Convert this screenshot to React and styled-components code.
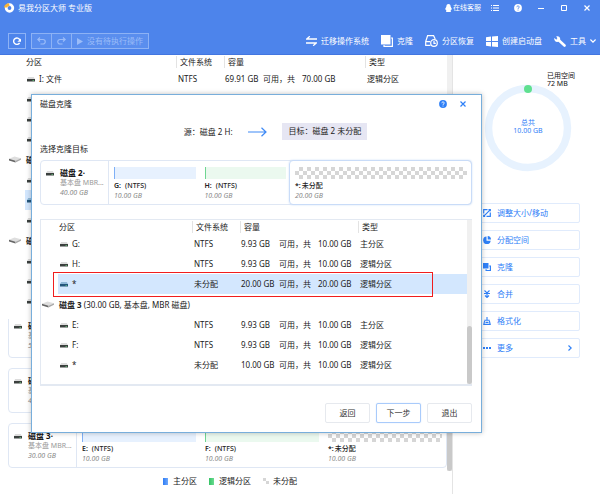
import { Fragment } from "react";
import styled, { createGlobalStyle, css } from "styled-components";

const GlobalStyle = createGlobalStyle`
  * {
    box-sizing: border-box;
  }
  body {
    margin: 0;
    background: #fff;
    color: #222;
    font-family: "Noto Sans", "Noto Sans CJK SC", sans-serif;
    font-size: 8px;
    line-height: 10px;
  }
  button {
    padding: 0;
    border: 0;
    background: none;
    color: inherit;
    font: inherit;
    white-space: nowrap;
    cursor: pointer;
  }
  svg {
    display: block;
    flex-shrink: 0;
  }
`;

const checker = css`
  background: repeating-conic-gradient(#d6d6d6 0 25%, #fff 0 50%) 0 0 / 8px 8px;
`;

const Page = styled.div`
  display: flex;
  flex-direction: column;
  height: 100vh;
  position: relative;
  overflow: hidden;
`;

/* header */
const Header = styled.header`
  background-color: #4d84eb;
  border-bottom: 1px solid #4276e0;
  color: #fff;
`;
const TitleBar = styled.div`
  display: flex;
  align-items: center;
  justify-content: space-between;
  height: 16px;
  padding: 0 9px 0 4px;
`;
const AppName = styled.h1`
  display: flex;
  align-items: center;
  gap: 3px;
  margin: 0;
  font-size: 8px;
  font-weight: 400;
`;
const WindowControls = styled.div`
  display: flex;
  align-items: center;
  gap: 15px;
  button {
    display: grid;
    place-items: center;
    width: 8px;
  }
`;
const ServiceLink = styled.a`
  display: flex;
  align-items: center;
  gap: 1px;
  margin-right: -5px;
  color: #fff;
  font-size: 7px;
  text-decoration: none;
`;
const Toolbar = styled.div`
  display: flex;
  align-items: center;
  justify-content: space-between;
  height: 38px;
  padding: 12px 4px 0 8px;
`;
const ToolGroup = styled.div`
  display: flex;
  gap: ${props => props.$gap}px;
`;
const Refresh = styled.button`
  display: grid;
  place-items: center;
  width: 18px;
  height: 16px;
  border: 1px solid #8db2f5;
`;
const Pending = styled.div`
  display: flex;
  height: 16px;
  border: 1px solid #8db2f5;
  background-color: #5a8eee;
`;
const PendingButton = styled.button`
  display: flex;
  align-items: center;
  justify-content: center;
  gap: 4px;
  min-width: 19px;
  padding: 0 5px;
  color: #9bbcf8;
  & + & {
    border-left: 1px solid #8db2f5;
  }
`;
const Tool = styled.button`
  display: flex;
  align-items: center;
  gap: 4px;
`;

/* body */
const Body = styled.div`
  display: flex;
  flex: 1;
  min-height: 0;
`;
const Main = styled.main`
  display: flex;
  flex-direction: column;
  flex: 1;
  min-width: 0;
  border-right: 1px solid #e4e4e4;
`;
const Scroller = styled.div`
  display: flex;
  min-height: 0;
  ${props => props.$grow && "flex: 1;"}
`;
const Track = styled.div`
  display: flex;
  flex-direction: column;
  justify-content: flex-end;
  width: 5px;
  background-color: #f0f0f0;
`;
const Thumb = styled.div`
  height: ${props => props.$size}px;
  border-radius: 3px;
  background-color: #c9c9c9;
`;

const Table = styled.table`
  flex: 1;
  width: 100%;
  min-width: 0;
  table-layout: fixed;
  border-collapse: collapse;
  margin-bottom: ${props => props.$space}px;
  th,
  td {
    padding: 0;
    text-align: left;
    font-weight: 400;
    white-space: nowrap;
  }
`;
const Head = styled.th`
  height: ${props => props.$height}px;
  div {
    padding-left: ${props => (props.$line ? 3 : 1)}px;
    line-height: 12px;
    border-left: ${props => (props.$line ? "1px solid #e3e3e3" : "0")};
  }
`;
const Row = styled.tr`
  height: 20px;
  td:not(:first-child) {
    padding-left: 2px;
    background-color: ${props => (props.$selected ? "#d3e7fe" : "transparent")};
  }
`;
const DiskRow = styled.tr`
  height: 21px;
  td:last-child {
    padding-left: 1px;
  }
  svg {
    margin-left: auto;
    margin-right: 4px;
  }
`;
const NameCell = styled.div`
  display: flex;
  align-items: center;
  gap: 4px;
`;
const Capacity = styled.div`
  display: grid;
  grid-template-columns: 38px 39px auto;
  margin-left: -1px;
`;

/* disk cards */
const Cards = styled.div`
  display: flex;
  flex-direction: column;
  justify-content: flex-end;
  gap: 10px;
  flex: 1;
  min-width: 0;
  overflow: hidden;
  padding: 0 0 3px 8px;
`;
const Card = styled.section`
  display: flex;
  flex-shrink: 0;
  height: 45px;
  border: 1px solid #dfe7f4;
  border-radius: 4px;
  background-color: #fff;
`;
const CardInfo = styled.div`
  display: flex;
  gap: 6px;
  width: 68px;
  padding: 7px 0 0 5px;
  border-right: 1px solid #dfe7f4;
  svg {
    margin-top: 3px;
  }
`;
const CardTexts = styled.div`
  color: #999;
  font-size: 7px;
  white-space: nowrap;
`;
const DiskName = styled.strong`
  display: block;
  color: #111;
  font-size: 8px;
`;
const Segments = styled.div`
  display: grid;
  flex: 1;
  grid-template-columns: ${props => props.$sizes.map(size => `minmax(0, ${size}fr)`).join(" ")};
`;
const Segment = styled.div`
  padding: 6px 4px 0 5px;
  font-size: 7px;
  white-space: nowrap;
  ${props =>
    props.$selected &&
    css`
      margin: -1px;
      border: 1px solid #c9dcf8;
      border-radius: 4px;
      box-shadow: 0 0 2px #c9dcf8;
    `}
`;
const Bar = styled.div`
  height: 12px;
  margin-bottom: 2px;
  ${props => props.$kind === "primary" && "background: #e7f1fe; border-left: 1px solid #7fb0f6;"}
  ${props => props.$kind === "logical" && "background: #ebf9ef; border-left: 1px solid #6fd692;"}
  ${props => props.$kind === "free" && checker}
`;
const SegmentLabel = styled.div`
  font-weight: 500;
  b {
    margin-right: ${props => (props.$gap ? 4 : 1)}px;
    font-weight: 600;
  }
`;
const Size = styled.em`
  display: block;
  color: #888;
  font-size: 7px;
`;

const Legend = styled.footer`
  display: flex;
  align-items: flex-start;
  justify-content: center;
  gap: 12px;
  height: 23px;
  padding: 5px 0 0 8px;
`;
const LegendItem = styled.span`
  display: flex;
  align-items: center;
  gap: 5px;
  &::before {
    content: "";
    width: 5px;
    height: 7px;
    background: ${props => props.$color};
  }
  ${props =>
    props.$free &&
    css`
      gap: 4px;
      &::before {
        width: 6px;
        height: 6px;
        background: repeating-conic-gradient(#fff 0 25%, #d6d6d6 0 50%);
      }
    `}
`;

/* side panel */
const Side = styled.aside`
  width: 147px;
  padding: 17px 20px 0 23px;
`;
const Usage = styled.div`
  display: grid;
  justify-items: center;
  margin-bottom: 31px;
  font-size: 7px;
  line-height: 8px;
  > * {
    grid-area: 1 / 1;
  }
  > svg {
    margin-top: 12px;
  }
`;
const Used = styled.div`
  justify-self: end;
  width: 33px;
  color: #111;
  white-space: nowrap;
`;
const Total = styled.div`
  align-self: center;
  margin-top: 9px;
  color: #2f80f7;
  text-align: center;
`;
const Actions = styled.div`
  display: flex;
  flex-direction: column;
  gap: 7px;
`;
const Action = styled.button`
  display: flex;
  align-items: center;
  gap: 6px;
  height: 20px;
  padding: 0 7px 0 6px;
  border: 1px solid #e0ebfc;
  border-radius: 2px;
  color: #2f80f7;
  svg + span + svg {
    margin-left: auto;
  }
`;

/* dialog */
const Dialog = styled.div`
  position: absolute;
  top: 94px;
  left: 31px;
  right: 118px;
  padding: 0 9px 9px 8px;
  border: 1px solid #78aedb;
  background-color: #fff;
  box-shadow: 0 0 5px rgba(0, 0, 0, 0.25);
`;
const DialogTitle = styled.div`
  display: flex;
  align-items: center;
  justify-content: space-between;
  height: 18px;
  h2 {
    margin: 0;
    font-size: 8px;
    font-weight: 400;
  }
`;
const DialogControls = styled.div`
  display: flex;
  align-items: center;
  gap: 13px;
  padding-right: 6px;
  color: #2f80f7;
`;
const Route = styled.div`
  display: flex;
  align-items: center;
  justify-content: center;
  gap: 15px;
  padding: 10px 0 4px 39px;
`;
const Target = styled.span`
  padding: 3px 6px 4px 7px;
  background-color: #e6e6f3;
`;
const Caption = styled.p`
  margin: 0 0 6px;
`;
const ListBox = styled.div`
  position: relative;
  display: flex;
  margin-top: 14px;
  border: 1px solid #e3e9f2;
  border-width: 1px 0 2px 1px;
`;
const Highlight = styled.div`
  position: absolute;
  top: 52px;
  left: 12px;
  right: 39px;
  height: 25px;
  border: 1px solid #f01d1d;
`;
const DialogFooter = styled.div`
  display: flex;
  justify-content: flex-end;
  gap: 6px;
  padding-top: 17px;
`;
const DialogButton = styled.button`
  width: 45px;
  height: 20px;
  border: 1px solid ${props => (props.$primary ? "#a9cbfb" : "#e6e9ee")};
  border-radius: 2px;
  color: #333;
  box-shadow: ${props => (props.$primary ? "0 0 1px #a9cbfb" : "none")};
`;

const DriveIcon = ({ active }) => (
  <svg width="8" height="5" viewBox="0 0 8 5">
    <path d="M1.2 0h5.6L8 2H0z" fill={active ? "#8fb8d8" : "#dcdcdc"} />
    <path d="M0 2h8v2.5H0z" fill={active ? "#24567c" : "#3b403e"} />
    <path d="M5.5 3h1.500v.8H5.500z" fill="#63c77b" />
  </svg>
);

const DiskIcon = () => (
  <svg width="12" height="7" viewBox="0 0 12 7">
    <path d="M0 2.8 5.5 0.6 12 2.2 6.5 4.8z" fill="#dedede" />
    <path d="M0 2.8 6.5 4.8v1.8L0 4.4z" fill="#666" />
    <path d="M6.5 4.8 12 2.2v1.5L6.5 6.6z" fill="#aaa" />
  </svg>
);

const HelpIcon = ({ color, mark }) => (
  <svg width="8" height="8" viewBox="0 0 8 8">
    <circle cx="4" cy="4" r="3.9" fill={color} />
    <path d="M2.8 3.2c0-1.7 2.5-1.6 2.4-.1C5.2 4 4 3.9 4 4.9M4 5.6v.9" fill="none" stroke={mark} strokeWidth="0.9" />
  </svg>
);

const CloseIcon = () => (
  <svg width="6" height="6" viewBox="0 0 6 6">
    <path d="M.5.5l5 5m0-5-5 5" stroke="currentColor" strokeWidth="1.2" />
  </svg>
);

const CopyIcon = ({ size }) => (
  <svg width={size} height={size} viewBox="0 0 12 12">
    <path d="M0 0h9.500v9.500H0z" fill="currentColor" />
    <path d="M10 3h1.400v8.400H3V10" fill="none" stroke="currentColor" strokeWidth="1.200" />
  </svg>
);

const tools = [
  {
    label: "迁移操作系统",
    icon: (
      <svg width="11" height="10" viewBox="0 0 11 10">
        <path d="M3.8.3.8 3H11M7.200 9.700 10.200 7H0" fill="none" stroke="#fff" strokeWidth="1.3" />
      </svg>
    ),
  },
  { label: "克隆", icon: <CopyIcon size={12} /> },
  {
    label: "分区恢复",
    icon: (
      <svg width="13" height="12" viewBox="0 0 13 12" fill="none" stroke="#fff" strokeWidth="1.2">
        <path d="M5.500 10.400H.700V6.500L2.600.700h6L10.200 4M.700 6.700h4.500" />
        <circle cx="9" cy="8" r="3.300" />
        <path d="M9 6v2.300h1.800" />
      </svg>
    ),
  },
  {
    label: "创建启动盘",
    icon: (
      <svg width="12" height="11" viewBox="0 0 12 11" fill="#fff">
        <path d="M0 1.200 5 .6V5H0zM6 .5 12 0v5H6zM0 6h5v4.500L0 9.800zM6 6h6v5l-6-.6z" />
      </svg>
    ),
  },
  {
    label: "工具",
    icon: (
      <svg width="12" height="11" viewBox="0 0 12 11">
        <path d="M4 3.500 10.500 9.500" stroke="#fff" strokeWidth="2.600" strokeLinecap="round" />
        <path d="M.300 2 2.500 3.800 3.700 2.700 2.200.4C4.500-.4 6.600 1.200 6.200 3.500 5.700 6 2.500 6.700 1 4.900.300 4 .100 3 .300 2z" fill="#fff" />
      </svg>
    ),
    more: true,
  },
];

const actions = [
  {
    label: "调整大小/移动",
    icon: <path d="M4.500.7H.7v3.800M3.500 7.300h3.800V3.500M.6 7.400 7.400.6M5.500.7h1.800v1.500M.7 5.800v1.500h1.500" fill="none" stroke="currentColor" strokeWidth="1.200" />,
  },
  {
    label: "分配空间",
    icon: <path d="M3.500.600V4.700h4.200A3.800 3.800 0 1 1 3.500.600zM4.700 0A3.600 3.600 0 0 1 8 3.500H4.700z" fill="currentColor" />,
  },
  {
    label: "克隆",
    icon: (
      <g fill="currentColor">
        <path d="M0 0h5.500v5.500H0z" />
        <path d="M6.200 2.500H8V8H2.500V6.200h1.200v.700h3.100V3.600h-.6z" />
      </g>
    ),
  },
  {
    label: "合并",
    icon: <path d="M1.500.500 4 3 6.500.500M4 3v4.700M1 3.500h6M2 5.500 4 7.500l2-2" fill="none" stroke="currentColor" strokeWidth="1.100" />,
  },
  {
    label: "格式化",
    icon: <path d="M4 0V3M1.300 3.200h5.400M1.600 4 .800 7.400h6.400L6.400 4M2.500 5.400h3" fill="none" stroke="currentColor" strokeWidth="1.100" />,
  },
  {
    label: "更多",
    icon: <path d="M0 3h2v2H0zM3 3h2v2H3zM6 3h2v2H6z" fill="currentColor" />,
    more: true,
  },
];

const mainRows = [
  { name: "I: 文件", fs: "NTFS", free: "69.91 GB", total: "70.00 GB", type: "逻辑分区" },
  { name: "J:", fs: "NTFS", free: "9.93 GB", total: "10.00 GB", type: "逻辑分区" },
  { name: "K:", fs: "NTFS", free: "9.93 GB", total: "10.00 GB", type: "逻辑分区" },
  { name: "*", fs: "未分配", free: "10.00 GB", total: "10.00 GB", type: "逻辑分区" },
  { disk: "磁盘 2", detail: "(40.00 GB, 基本盘, MBR 磁盘)" },
  { name: "G:", fs: "NTFS", free: "9.93 GB", total: "10.00 GB", type: "主分区" },
  { name: "H:", fs: "NTFS", free: "9.93 GB", total: "10.00 GB", type: "逻辑分区", selected: true },
  { name: "*", fs: "未分配", free: "20.00 GB", total: "20.00 GB", type: "逻辑分区" },
  { disk: "磁盘 3", detail: "(30.00 GB, 基本盘, MBR 磁盘)" },
  { name: "E:", fs: "NTFS", free: "9.93 GB", total: "10.00 GB", type: "主分区" },
  { name: "F:", fs: "NTFS", free: "9.93 GB", total: "10.00 GB", type: "逻辑分区" },
  { name: "*", fs: "未分配", free: "10.00 GB", total: "10.00 GB", type: "逻辑分区" },
];

const dialogRows = mainRows.slice(5).map(row => ({ ...row, selected: row.free === "20.00 GB" }));

const disks = [
  {
    name: "磁盘 1",
    size: "500.00 GB",
    segments: [{ letter: "C:", size: 100, kind: "primary" }, { letter: "I:", size: 70, kind: "logical" }],
  },
  {
    name: "磁盘 2",
    size: "40.00 GB",
    segments: [
      { letter: "G:", size: 10, kind: "primary" },
      { letter: "H:", size: 10, kind: "logical" },
      { letter: "*:", size: 20, kind: "free" },
    ],
  },
  {
    name: "磁盘 3",
    size: "30.00 GB",
    segments: [
      { letter: "E:", size: 10, kind: "primary" },
      { letter: "F:", size: 10, kind: "logical" },
      { letter: "*:", size: 10, kind: "free" },
    ],
  },
];

function PartitionTable({ rows, indent, columns, headHeight, space }) {
  return (
    <Table $space={space}>
      <colgroup>
        <col style={{ width: indent }} />
        {columns.map((width, i) => <col key={i} style={{ width }} />)}
        <col />
      </colgroup>
      <thead>
        <tr>
          <td />
          {["分区", "文件系统", "容量", "类型"].map((label, i) => (
            <Head key={label} $line={i > 0} $height={headHeight}><div>{label}</div></Head>
          ))}
        </tr>
      </thead>
      <tbody>
        {rows.map((row, i) => row.disk ? (
          <DiskRow key={i}>
            <td><DiskIcon /></td>
            <td colSpan={4}><b>{row.disk}</b> {row.detail}</td>
          </DiskRow>
        ) : (
          <Row key={i} $selected={row.selected}>
            <td />
            <td><NameCell><DriveIcon active={row.selected} />{row.name}</NameCell></td>
            <td>{row.fs}</td>
            <td>
              <Capacity>
                <span>{row.free}</span>
                <span>可用，共</span>
                <span>{row.total}</span>
              </Capacity>
            </td>
            <td>{row.type}</td>
          </Row>
        ))}
      </tbody>
    </Table>
  );
}

function DiskCard({ disk, selected }) {
  return (
    <Card>
      <CardInfo>
        <DriveIcon />
        <CardTexts>
          <DiskName>{disk.name}·</DiskName>
          基本盘 MBR...
          <Size>{disk.size}</Size>
        </CardTexts>
      </CardInfo>
      <Segments $sizes={disk.segments.map(segment => segment.size)}>
        {disk.segments.map(segment => (
          <Segment key={segment.letter} $selected={selected === segment.letter}>
            <Bar $kind={segment.kind} />
            <SegmentLabel $gap={segment.kind !== "free"}>
              <b>{segment.letter}</b>
              {segment.kind === "free" ? "未分配" : "(NTFS)"}
            </SegmentLabel>
            <Size>{segment.size}.00 GB</Size>
          </Segment>
        ))}
      </Segments>
    </Card>
  );
}

function CloneDialog() {
  return (
    <Dialog role="dialog" aria-labelledby="clone-title">
      <DialogTitle>
        <h2 id="clone-title">磁盘克隆</h2>
        <DialogControls>
          <button aria-label="帮助"><HelpIcon color="#2f80f7" mark="#fff" /></button>
          <button aria-label="关闭"><CloseIcon /></button>
        </DialogControls>
      </DialogTitle>
      <Route>
        <span>源：磁盘 2 H:</span>
        <svg width="19" height="10" viewBox="0 0 19 10">
          <path d="M0 5h18M13.500.700 18 5l-4.500 4.300" fill="none" stroke="#3f8af5" strokeWidth="1.200" />
        </svg>
        <Target>目标：磁盘 2 未分配</Target>
      </Route>
      <Caption>选择克隆目标</Caption>
      <DiskCard disk={disks[1]} selected="*:" />
      <ListBox>
        <PartitionTable rows={dialogRows} indent={17} columns={[134, 48, 118]} headHeight={14} space={9} />
        <Track><Thumb $size={58} /></Track>
        <Highlight />
      </ListBox>
      <DialogFooter>
        <DialogButton>返回</DialogButton>
        <DialogButton $primary>下一步</DialogButton>
        <DialogButton>退出</DialogButton>
      </DialogFooter>
    </Dialog>
  );
}

export default function App() {
  return (
    <Fragment>
      <GlobalStyle />
      <Page>
        <Header>
          <TitleBar>
            <AppName>
              <svg width="11" height="10" viewBox="0 0 11 10">
                <circle cx="5.500" cy="5" r="3.300" fill="none" stroke="#fff" strokeWidth="2.800" />
                <path d="M0 4.600C.300 1.800 2.400.200 5 .200L5.600 3C4 3 3.400 3.800 3.200 4.600z" fill="#f9b233" />
              </svg>
              易我分区大师 专业版
            </AppName>
            <WindowControls>
              <ServiceLink href="#service">
                <svg width="7" height="8" viewBox="0 0 7 8" fill="#fff">
                  <path d="M3.500 0C5 0 5.700 1.200 5.700 2.800L7 5.200 6 5.800 5.600 7 6 8H1l.4-1L1 5.800 0 5.200 1.300 2.800C1.300 1.200 2 0 3.500 0z" />
                </svg>
                在线客服
              </ServiceLink>
              <button aria-label="菜单">
                <svg width="8" height="6" viewBox="0 0 8 6">
                  <path d="M0 .5h1M2 .5h6M0 3h1M2 3h6M0 5.500h1M2 5.500h6" stroke="#fff" />
                </svg>
              </button>
              <button aria-label="帮助"><HelpIcon color="#fff" mark="#4d84eb" /></button>
              <button aria-label="最小化">
                <svg width="6" height="6" viewBox="0 0 6 6"><path d="M0 3.500h6" stroke="#fff" /></svg>
              </button>
              <button aria-label="最大化">
                <svg width="6" height="6" viewBox="0 0 6 6"><path d="M.5.5h5v5h-5z" fill="none" stroke="#fff" /></svg>
              </button>
              <button aria-label="关闭"><CloseIcon /></button>
            </WindowControls>
          </TitleBar>
          <Toolbar>
            <ToolGroup $gap={5}>
              <Refresh aria-label="刷新">
                <svg width="8" height="8" viewBox="0 0 8 8">
                  <path d="M6.600 5.800A3.200 3.200 0 1 1 6.800 3" fill="none" stroke="#fff" strokeWidth="1.400" />
                  <path d="M8 1.500v3.300H4.300z" fill="#fff" />
                </svg>
              </Refresh>
              <Pending>
                <PendingButton aria-label="撤销">
                  <svg width="9" height="8" viewBox="0 0 9 8">
                    <path d="M3 .5.800 2.500 3 4.500M1 2.500h5a2.200 2.200 0 0 1 0 4.500H3.500" fill="none" stroke="currentColor" strokeWidth="1.200" />
                  </svg>
                </PendingButton>
                <PendingButton aria-label="重做">
                  <svg width="9" height="8" viewBox="0 0 9 8">
                    <path d="M6 .5 8.200 2.500 6 4.500M8 2.500H3a2.200 2.200 0 0 0 0 4.500h2.500" fill="none" stroke="currentColor" strokeWidth="1.200" />
                  </svg>
                </PendingButton>
                <PendingButton>
                  <svg width="6" height="7" viewBox="0 0 6 7"><path d="M0 0 6 3.500 0 7z" fill="currentColor" /></svg>
                  没有待执行操作
                </PendingButton>
              </Pending>
            </ToolGroup>
            <ToolGroup $gap={12}>
              {tools.map(tool => (
                <Tool key={tool.label}>
                  {tool.icon}
                  {tool.label}
                  {tool.more && (
                    <svg width="6" height="4" viewBox="0 0 6 4">
                      <path d="M.400.500 3 3.100 5.600.500" fill="none" stroke="#fff" strokeWidth="1.200" />
                    </svg>
                  )}
                </Tool>
              ))}
            </ToolGroup>
          </Toolbar>
        </Header>
        <Body>
          <Main>
            <Scroller>
              <PartitionTable rows={mainRows} indent={25} columns={[151, 48, 141]} headHeight={14} space={8} />
              <Track />
            </Scroller>
            <Scroller $grow>
              <Cards>
                {disks.map(disk => <DiskCard key={disk.name} disk={disk} />)}
              </Cards>
              <Track><Thumb $size={120} /></Track>
            </Scroller>
            <Legend>
              <LegendItem $color="linear-gradient(90deg, #2f7df6, #6fa8fb)">主分区</LegendItem>
              <LegendItem $color="linear-gradient(90deg, #35c366, #6bdb90)">逻辑分区</LegendItem>
              <LegendItem $free>未分配</LegendItem>
            </Legend>
          </Main>
          <Side>
            <Usage>
              <svg width="88" height="88" viewBox="0 0 88 88">
                <circle cx="44" cy="44" r="39.500" fill="none" stroke="#e7f2fe" strokeWidth="7.500" />
                <circle cx="44" cy="5" r="4" fill="#5fe090" />
              </svg>
              <Used>已用空间<br />72 MB</Used>
              <Total>总共<br />10.00 GB</Total>
            </Usage>
            <Actions>
              {actions.map(action => (
                <Action key={action.label}>
                  <svg width="8" height="8" viewBox="0 0 8 8">{action.icon}</svg>
                  <span>{action.label}</span>
                  {action.more && (
                    <svg width="4" height="6" viewBox="0 0 4 6">
                      <path d="M.500.500 3.200 3 .500 5.500" fill="none" stroke="currentColor" strokeWidth="1.200" />
                    </svg>
                  )}
                </Action>
              ))}
            </Actions>
          </Side>
        </Body>
        <CloneDialog />
      </Page>
    </Fragment>
  );
}
